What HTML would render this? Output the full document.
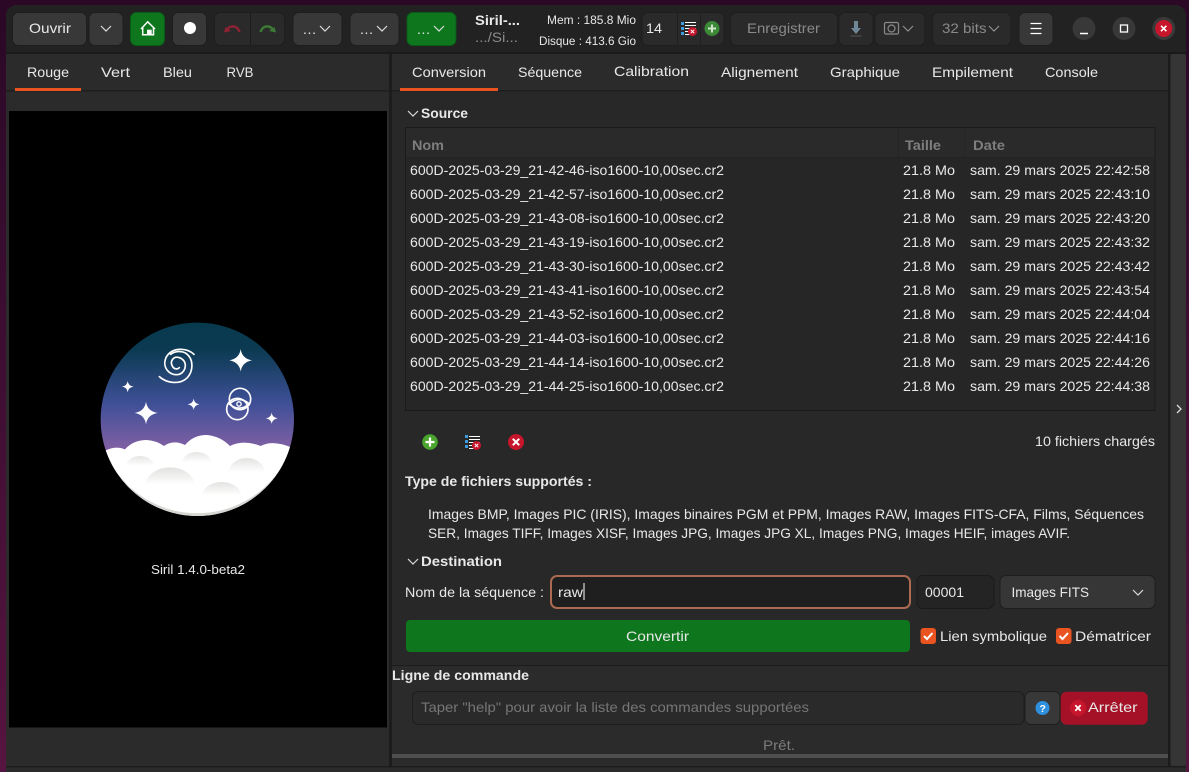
<!DOCTYPE html>
<html lang="fr"><head><meta charset="utf-8"><title>Siril</title>
<style>
html,body{margin:0;padding:0;background:#2a0826;width:1189px;height:772px;overflow:hidden}
svg{display:block;position:absolute;left:0;top:0}
text{font-family:"Liberation Sans",sans-serif;font-size:14px;fill:#e8e8e8}
.b{font-weight:bold}
.g{fill:#8a8a8a}
.s{font-size:11.5px}
.h{font-weight:bold;fill:#7e7e7e}
.c{fill:none;stroke:#dcdcdc;stroke-width:1.2}
.cg{fill:none;stroke:#8f8f8f;stroke-width:1.2}
.btn{fill:#383838;stroke:#1e1e1e}
.dis{fill:#2a2a2a;stroke:#1e1e1e}
.grn{fill:#0e771e;stroke:#0a5a17}
</style></head><body>
<svg width="1189" height="772" viewBox="0 0 1189 772" xmlns="http://www.w3.org/2000/svg">
<defs>
<linearGradient id="bg" x1="0" y1="0" x2="0" y2="1"><stop offset="0" stop-color="#2a0826"/><stop offset="1" stop-color="#561440"/></linearGradient>
<linearGradient id="sky" x1="0" y1="0" x2="0" y2="1"><stop offset="0" stop-color="#083a4e"/><stop offset=".14" stop-color="#0b3a52"/><stop offset=".42" stop-color="#3f5097"/><stop offset=".64" stop-color="#7d5fa3"/><stop offset="1" stop-color="#8d64a6"/></linearGradient>
<linearGradient id="pf" x1="0" y1="0" x2="0" y2="1"><stop offset="0" stop-color="#d4d4d2"/><stop offset=".45" stop-color="#ffffff"/></linearGradient>
<clipPath id="cc"><circle cx="322" cy="328" r="290"/></clipPath>
</defs>
<rect width="1189" height="772" fill="url(#bg)"/>
<rect x="6" y="5" width="1180" height="780" rx="11" fill="#2b2b2b"/>
<path d="M6 53V16a11 11 0 0 1 11-11H1175a11 11 0 0 1 11 11V53Z" fill="#222222"/>
<rect x="6" y="52" width="1180" height="2" fill="#1a1a1a"/>

<!-- toolbar -->
<rect class="btn" x="12.5" y="12.5" width="74" height="33" rx="6"/>
<text x="29" y="33" textLength="42" lengthAdjust="spacingAndGlyphs">Ouvrir</text>
<rect class="btn" x="89" y="12.5" width="34" height="33" rx="6"/>
<path class="c" d="M101 26l5 5 5-5"/>
<rect class="grn" x="130.5" y="12.5" width="34" height="33" rx="6"/>
<path d="M141 29L147.700 21.800 155 29M142.700 27.500V34.700H153.500V27.500" fill="none" stroke="#fff" stroke-width="1.500"/>
<rect x="147" y="29.700" width="4.700" height="5" fill="#fff"/>
<rect class="btn" x="172.5" y="12.5" width="34" height="33" rx="6"/>
<circle cx="190" cy="28" r="6" fill="#fff"/>
<rect class="dis" x="214.5" y="12.5" width="70" height="33" rx="6"/>
<path d="M250.5 13v32" stroke="#1c1c1c"/>
<path d="M227 29.500C230 25.500 237 24.500 239.500 32" fill="none" stroke="#8e2233" stroke-width="2.500"/>
<path d="M224 32.500L225.500 27 231 31Z" fill="#8e2233"/>
<path d="M273 29.500C270 25.500 263 24.500 260.500 32" fill="none" stroke="#3c7a36" stroke-width="2.500"/>
<path d="M276 32.500L274.500 27 269 31Z" fill="#3c7a36"/>
<rect class="btn" x="293" y="12.500" width="49" height="33" rx="6"/>
<text x="303" y="34" textLength="13" lengthAdjust="spacing">...</text>
<path class="c" d="M320 26l5 5 5-5"/>
<rect class="btn" x="350" y="12.500" width="49" height="33" rx="6"/>
<text x="360" y="34" textLength="13" lengthAdjust="spacing">...</text>
<path class="c" d="M377 26l5 5 5-5"/>
<rect class="grn" x="407" y="12.500" width="49" height="33" rx="6"/>
<text x="417" y="34" textLength="13" lengthAdjust="spacing">...</text>
<path class="c" d="M434 26l5 5 5-5"/>

<text class="b" x="475" y="25" textLength="45" lengthAdjust="spacingAndGlyphs">Siril-...</text>
<text class="g" x="475" y="42" textLength="43" lengthAdjust="spacingAndGlyphs">.../Si...</text>
<text class="s" x="547" y="24" textLength="89" lengthAdjust="spacingAndGlyphs">Mem : 185.8 Mio</text>
<text class="s" x="539" y="45" textLength="97" lengthAdjust="spacingAndGlyphs">Disque : 413.6 Gio</text>

<rect class="dis" x="642" y="12.500" width="82" height="33" rx="6"/>
<path d="M677.500 13v32M700.500 13v32" stroke="#1f1f1f"/>
<text x="646" y="33" textLength="16" lengthAdjust="spacingAndGlyphs">14</text>
<g fill="#3d9be0"><rect x="681" y="22" width="3" height="3"/><rect x="681" y="27" width="3" height="3"/><rect x="681" y="32" width="3" height="3"/></g>
<path d="M685 22.500h11M685 25.500h11M685 28.500h11M685 31.500h6M685 34.500h5" stroke="#fff"/>
<circle cx="692.500" cy="31.500" r="4.500" fill="#c7162b"/>
<path d="M690.800 29.800l3.400 3.400M694.200 29.800l-3.400 3.400" stroke="#fff"/>
<circle cx="712" cy="28.500" r="7.500" fill="#3c8a38"/>
<path d="M712 24.500v8M708 28.500h8" stroke="#cfe3cc" stroke-width="2"/>
<rect class="dis" x="730.500" y="12.500" width="107" height="33" rx="6"/>
<text class="g" x="747" y="33" textLength="73" lengthAdjust="spacingAndGlyphs">Enregistrer</text>
<rect class="dis" x="839" y="12.500" width="34" height="33" rx="6"/>
<path d="M854 21h4v7h3l-5 6-5-6h3z" fill="#6f8796"/><path d="M850.500 36h11" stroke="#555"/>
<rect class="dis" x="875" y="12.500" width="50" height="33" rx="6"/>
<rect x="884.500" y="22.500" width="14" height="11.500" rx="1.500" fill="none" stroke="#8a8a8a" stroke-width="1.200"/>
<circle cx="891.500" cy="28.500" r="3.500" fill="none" stroke="#8a8a8a" stroke-width="1.200"/>
<path class="cg" d="M903 26l5 5 5-5"/>
<rect class="dis" x="932.500" y="12.500" width="78.500" height="33" rx="6"/>
<text class="g" x="942" y="33" textLength="44.500" lengthAdjust="spacingAndGlyphs">32 bits</text>
<path class="cg" d="M989 26l5 5 5-5"/>
<rect class="btn" x="1019" y="12.500" width="34" height="33" rx="6"/>
<path d="M1031 23.500h11M1031 28.500h11M1031 33.500h11" stroke="#fff" stroke-width="1.200" transform="translate(-0.500 0)"/>
<circle cx="1084" cy="28.500" r="11.500" fill="#383838"/>
<path d="M1080 33.500h8" stroke="#fff" stroke-width="1.500"/>
<circle cx="1124" cy="28.500" r="11.500" fill="#383838"/>
<rect x="1120.500" y="25" width="7" height="7" fill="none" stroke="#fff" stroke-width="1.300"/>
<circle cx="1163.700" cy="28.500" r="11.500" fill="#3a3a3a"/>
<circle cx="1163.700" cy="28.500" r="8.500" fill="#c7162b"/>
<path d="M1161 25.800l5.400 5.400M1166.400 25.800l-5.400 5.400" stroke="#fff" stroke-width="1.600"/>

<!-- left panel -->
<rect x="6" y="90" width="383" height="1.500" fill="#1e1e1e"/>
<rect x="15" y="88" width="66" height="3" fill="#e95420"/>
<text x="27" y="77" textLength="42" lengthAdjust="spacingAndGlyphs">Rouge</text>
<text x="101" y="77" textLength="29" lengthAdjust="spacingAndGlyphs">Vert</text>
<text x="163" y="77" textLength="29" lengthAdjust="spacingAndGlyphs">Bleu</text>
<text x="226.500" y="77" textLength="27" lengthAdjust="spacingAndGlyphs">RVB</text>
<rect x="9" y="111" width="378" height="616.500" fill="#000"/>
<rect x="389" y="54" width="3" height="712" fill="#1c1c1c"/>

<!-- logo -->
<g transform="translate(90 310) scale(.33333)">
<circle cx="322" cy="328" r="290" fill="url(#sky)"/>
<g clip-path="url(#cc)">
<path d="M40 425Q75 405 105 418Q130 390 170 390Q200 392 222 408Q250 388 285 405Q310 375 350 375Q390 378 420 408Q460 388 512 408Q550 388 610 415V640H40Z" fill="#fff"/>
<ellipse cx="150" cy="470" rx="42" ry="32" fill="url(#pf)" opacity=".6"/>
<ellipse cx="320" cy="460" rx="45" ry="34" fill="url(#pf)" opacity=".6"/>
<ellipse cx="470" cy="490" rx="55" ry="46" fill="url(#pf)" opacity=".65"/>
<ellipse cx="240" cy="530" rx="75" ry="58" fill="url(#pf)" opacity=".7"/>
<ellipse cx="395" cy="560" rx="60" ry="44" fill="url(#pf)" opacity=".65"/>
<path d="M75 480A290 290 0 0 0 569 480A300 300 0 0 1 75 480Z" fill="#d6d6d2"/>
</g>
<g fill="#fff">
<path d="M452 117Q456 146 486 151Q456 156 452 185Q448 156 418 151Q448 146 452 117Z"/>
<path d="M168 275Q172 304 203 309Q172 314 168 343Q164 314 134 309Q164 304 168 275Z"/>
<path d="M113 213Q115 228 131 230Q115 232 113 247Q111 232 96 230Q111 228 113 213Z"/>
<path d="M311 266Q313 281 328 283Q313 285 311 300Q309 285 293 283Q309 281 311 266Z"/>
<path d="M545 308Q547 323 563 325Q547 327 545 342Q543 327 528 325Q543 323 545 308Z"/>
</g>
<g transform="translate(180 75)" fill="none" stroke="#fff" stroke-width="5" stroke-linecap="round">
<path d="M132 58C110 38 65 35 48 68C35 98 60 125 88 118C112 108 112 75 88 68C70 62 58 80 68 95C72 102 82 104 88 98"/>
<path d="M28 125C50 145 90 150 112 128C130 108 132 72 108 55C95 47 75 48 62 58"/>
<circle cx="270" cy="192" r="32"/>
<circle cx="262" cy="222" r="32"/>
<path d="M238 207Q267 180 298 207Q267 232 238 207Z"/>
<circle cx="267" cy="207" r="6.500" stroke-width="4"/>
</g>
</g>
<text x="151" y="574" font-size="12.500" style="font-size:12.500px" textLength="94" lengthAdjust="spacingAndGlyphs">Siril 1.4.0-beta2</text>

<!-- right tabs -->
<rect x="392" y="91" width="776" height="574" fill="#282828"/>
<rect x="392" y="90" width="777" height="1.500" fill="#1e1e1e"/>
<rect x="400" y="88" width="98" height="3" fill="#e95420"/>
<text x="412" y="77" textLength="74" lengthAdjust="spacingAndGlyphs">Conversion</text>
<text x="518" y="77" textLength="64" lengthAdjust="spacingAndGlyphs">Séquence</text>
<text x="614" y="76" textLength="75" lengthAdjust="spacingAndGlyphs">Calibration</text>
<text x="721" y="77" textLength="77" lengthAdjust="spacingAndGlyphs">Alignement</text>
<text x="830" y="77" textLength="70" lengthAdjust="spacingAndGlyphs">Graphique</text>
<text x="932" y="77" textLength="81" lengthAdjust="spacingAndGlyphs">Empilement</text>
<text x="1045" y="77" textLength="53" lengthAdjust="spacingAndGlyphs">Console</text>

<!-- right strip -->
<rect x="1168" y="54" width="2.500" height="712" fill="#1c1c1c"/>
<rect x="1170.500" y="54" width="15.500" height="712" rx="3" fill="#353535"/>
<path d="M1177 405l4 4-4 4" fill="none" stroke="#dcdcdc" stroke-width="1.300"/>

<!-- source -->
<path class="c" d="M408 111l5 5 5-5"/>
<text class="b" x="421" y="118" textLength="47" lengthAdjust="spacingAndGlyphs">Source</text>
<rect x="405.500" y="127.500" width="749.500" height="283" fill="#262626" stroke="#1b1b1b"/>
<rect x="406" y="128" width="748.500" height="29.500" fill="#2a2a2a"/>
<path d="M406 157.500H1154.500" stroke="#222"/>
<path d="M898.500 128v29M965 128v29" stroke="#252525"/>
<text class="h" x="412" y="150" textLength="32" lengthAdjust="spacingAndGlyphs">Nom</text>
<text class="h" x="905" y="150" textLength="36" lengthAdjust="spacingAndGlyphs">Taille</text>
<text class="h" x="973" y="150" textLength="32" lengthAdjust="spacingAndGlyphs">Date</text>

<g>
<text x="410" y="175" textLength="314" lengthAdjust="spacingAndGlyphs">600D-2025-03-29_21-42-46-iso1600-10,00sec.cr2</text><text x="903" y="175" textLength="52" lengthAdjust="spacingAndGlyphs">21.8 Mo</text><text x="970" y="175" textLength="180" lengthAdjust="spacingAndGlyphs">sam. 29 mars 2025 22:42:58</text>
<text x="410" y="199" textLength="314" lengthAdjust="spacingAndGlyphs">600D-2025-03-29_21-42-57-iso1600-10,00sec.cr2</text><text x="903" y="199" textLength="52" lengthAdjust="spacingAndGlyphs">21.8 Mo</text><text x="970" y="199" textLength="180" lengthAdjust="spacingAndGlyphs">sam. 29 mars 2025 22:43:10</text>
<text x="410" y="223" textLength="314" lengthAdjust="spacingAndGlyphs">600D-2025-03-29_21-43-08-iso1600-10,00sec.cr2</text><text x="903" y="223" textLength="52" lengthAdjust="spacingAndGlyphs">21.8 Mo</text><text x="970" y="223" textLength="180" lengthAdjust="spacingAndGlyphs">sam. 29 mars 2025 22:43:20</text>
<text x="410" y="247" textLength="314" lengthAdjust="spacingAndGlyphs">600D-2025-03-29_21-43-19-iso1600-10,00sec.cr2</text><text x="903" y="247" textLength="52" lengthAdjust="spacingAndGlyphs">21.8 Mo</text><text x="970" y="247" textLength="180" lengthAdjust="spacingAndGlyphs">sam. 29 mars 2025 22:43:32</text>
<text x="410" y="271" textLength="314" lengthAdjust="spacingAndGlyphs">600D-2025-03-29_21-43-30-iso1600-10,00sec.cr2</text><text x="903" y="271" textLength="52" lengthAdjust="spacingAndGlyphs">21.8 Mo</text><text x="970" y="271" textLength="180" lengthAdjust="spacingAndGlyphs">sam. 29 mars 2025 22:43:42</text>
<text x="410" y="295" textLength="314" lengthAdjust="spacingAndGlyphs">600D-2025-03-29_21-43-41-iso1600-10,00sec.cr2</text><text x="903" y="295" textLength="52" lengthAdjust="spacingAndGlyphs">21.8 Mo</text><text x="970" y="295" textLength="180" lengthAdjust="spacingAndGlyphs">sam. 29 mars 2025 22:43:54</text>
<text x="410" y="319" textLength="314" lengthAdjust="spacingAndGlyphs">600D-2025-03-29_21-43-52-iso1600-10,00sec.cr2</text><text x="903" y="319" textLength="52" lengthAdjust="spacingAndGlyphs">21.8 Mo</text><text x="970" y="319" textLength="180" lengthAdjust="spacingAndGlyphs">sam. 29 mars 2025 22:44:04</text>
<text x="410" y="343" textLength="314" lengthAdjust="spacingAndGlyphs">600D-2025-03-29_21-44-03-iso1600-10,00sec.cr2</text><text x="903" y="343" textLength="52" lengthAdjust="spacingAndGlyphs">21.8 Mo</text><text x="970" y="343" textLength="180" lengthAdjust="spacingAndGlyphs">sam. 29 mars 2025 22:44:16</text>
<text x="410" y="367" textLength="314" lengthAdjust="spacingAndGlyphs">600D-2025-03-29_21-44-14-iso1600-10,00sec.cr2</text><text x="903" y="367" textLength="52" lengthAdjust="spacingAndGlyphs">21.8 Mo</text><text x="970" y="367" textLength="180" lengthAdjust="spacingAndGlyphs">sam. 29 mars 2025 22:44:26</text>
<text x="410" y="391" textLength="314" lengthAdjust="spacingAndGlyphs">600D-2025-03-29_21-44-25-iso1600-10,00sec.cr2</text><text x="903" y="391" textLength="52" lengthAdjust="spacingAndGlyphs">21.8 Mo</text><text x="970" y="391" textLength="180" lengthAdjust="spacingAndGlyphs">sam. 29 mars 2025 22:44:38</text>
</g>

<!-- list icons -->
<circle cx="430" cy="442" r="7.800" fill="#4aa52e"/>
<path d="M430 437.500v9M425.500 442h9" stroke="#fff" stroke-width="2.200"/>
<g fill="#3d9be0"><rect x="465" y="435" width="3" height="3"/><rect x="465" y="440" width="3" height="3"/><rect x="465" y="445" width="3" height="3"/></g>
<path d="M469 436.500h11M469 439.500h11M469 442.500h11M469 445.500h6M469 448.500h5" stroke="#fff"/>
<circle cx="476.500" cy="445.500" r="4.500" fill="#c7162b"/>
<path d="M474.800 443.800l3.400 3.400M478.200 443.800l-3.400 3.400" stroke="#fff"/>
<circle cx="516" cy="442" r="8" fill="#c7162b"/>
<path d="M512.800 438.800l6.400 6.400M519.200 438.800l-6.400 6.400" stroke="#fff" stroke-width="2"/>
<text x="1035" y="446" textLength="120" lengthAdjust="spacingAndGlyphs">10 fichiers chargés</text>

<text class="b" x="405" y="486" textLength="187" lengthAdjust="spacingAndGlyphs">Type de fichiers supportés :</text>
<text x="428" y="519" textLength="716" lengthAdjust="spacingAndGlyphs">Images BMP, Images PIC (IRIS), Images binaires PGM et PPM, Images RAW, Images FITS-CFA, Films, Séquences</text>
<text x="428" y="538" textLength="642" lengthAdjust="spacingAndGlyphs">SER, Images TIFF, Images XISF, Images JPG, Images JPG XL, Images PNG, Images HEIF, images AVIF.</text>

<!-- destination -->
<path class="c" d="M408 559l5 5 5-5"/>
<text class="b" x="421" y="566" textLength="81" lengthAdjust="spacingAndGlyphs">Destination</text>
<text x="405" y="597" textLength="139" lengthAdjust="spacingAndGlyphs">Nom de la séquence :</text>
<rect x="551" y="576" width="359" height="32" rx="6" fill="#1f1f1f" stroke="#ac6a50" stroke-width="2"/>
<text x="558" y="597" textLength="25" lengthAdjust="spacingAndGlyphs">raw</text>
<path d="M584 583v17" stroke="#fff"/>
<rect x="917" y="575.500" width="77" height="33" rx="6" fill="#242424" stroke="#1a1a1a"/>
<text x="925" y="597" textLength="39" lengthAdjust="spacingAndGlyphs">00001</text>
<rect x="1000" y="575.500" width="155" height="33" rx="6" fill="#363636" stroke="#1e1e1e"/>
<text x="1011.500" y="597" textLength="77.500" lengthAdjust="spacingAndGlyphs">Images FITS</text>
<path class="c" d="M1133 590l5 5 5-5"/>
<rect x="406" y="620" width="504" height="32" rx="4" fill="#0e771e"/>
<text x="626" y="641" textLength="63" lengthAdjust="spacingAndGlyphs">Convertir</text>
<rect x="920.500" y="628" width="15.500" height="16" rx="3" fill="#e95420"/>
<path d="M924 636l3 3 5.500-6" fill="none" stroke="#fff" stroke-width="2"/>
<text x="940" y="641" textLength="107" lengthAdjust="spacingAndGlyphs">Lien symbolique</text>
<rect x="1056" y="628" width="15.500" height="16" rx="3" fill="#e95420"/>
<path d="M1059.500 636l3 3 5.500-6" fill="none" stroke="#fff" stroke-width="2"/>
<text x="1075" y="641" textLength="76" lengthAdjust="spacingAndGlyphs">Dématricer</text>

<!-- command line -->
<rect x="392" y="665" width="777" height="1" fill="#1c1c1c"/>
<text class="b" x="392" y="680" textLength="137" lengthAdjust="spacingAndGlyphs">Ligne de commande</text>
<rect x="412.500" y="691.500" width="611.500" height="33" rx="6" fill="#2a2a2a" stroke="#1e1e1e"/>
<text class="g" x="421" y="712" textLength="388" lengthAdjust="spacingAndGlyphs" style="fill:#767676">Taper "help" pour avoir la liste des commandes supportées</text>
<rect x="1025" y="691.500" width="35" height="33" rx="6" fill="#383838" stroke="#1e1e1e"/>
<circle cx="1042.500" cy="708" r="7" fill="#2f8fdd"/>
<text x="1039.500" y="712" style="font-size:10.500px;fill:#fff" class="b">?</text>
<rect x="1060.700" y="691.700" width="87" height="33" rx="6" fill="#a51227"/>
<circle cx="1078" cy="708" r="8" fill="#c7162b"/>
<path d="M1075.300 705.300l5.400 5.400M1080.700 705.300l-5.400 5.400" stroke="#fff" stroke-width="1.800"/>
<text x="1088" y="712" textLength="49.500" lengthAdjust="spacingAndGlyphs">Arrêter</text>
<text x="763" y="750" textLength="32" lengthAdjust="spacingAndGlyphs" style="fill:#7c7c7c">Prêt.</text>
<rect x="392" y="754" width="776" height="4" fill="#4f4f4f"/>
<rect x="6" y="766" width="1180" height="1.500" fill="#1c1c1c"/>
</svg>
</body></html>
